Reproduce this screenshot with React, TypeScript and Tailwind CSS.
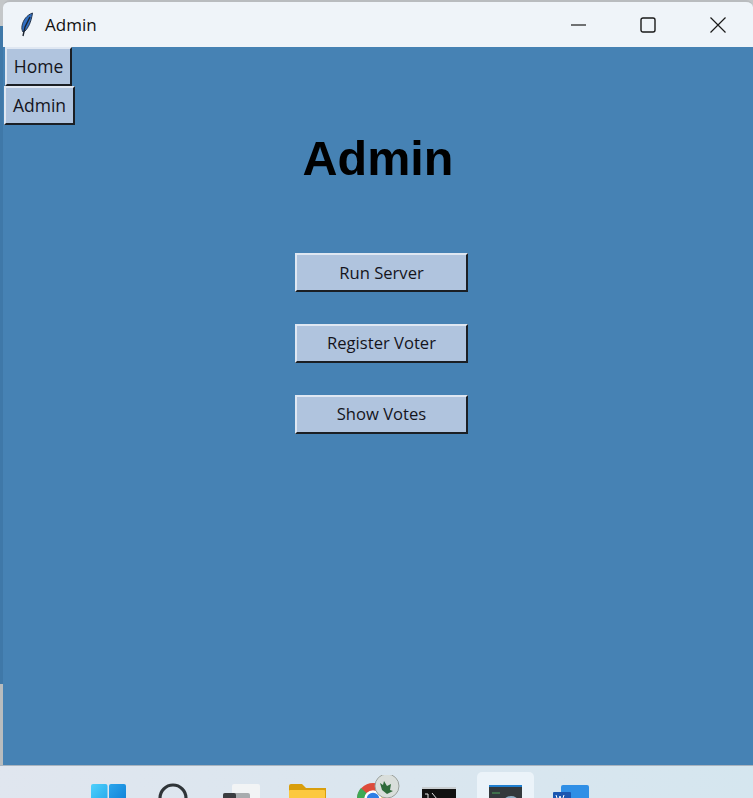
import React from "react";

const uiFont = "font-['Open_Sans','Noto_Sans',sans-serif]";

// tk style raised button
function TkButton({ label, className }: { label: string; className: string }) {
  return (
    <button
      className={`flex items-center justify-center bg-[#b0c4de] text-[#14141c] border-t-2 border-l-2 border-r-2 border-b-2 border-t-[#dfe7f2] border-l-[#dfe7f2] border-r-[#1b1f24] border-b-[#1b1f24] ${uiFont} ${className}`}
    >
      {label}
    </button>
  );
}

function Feather() {
  return (
    <svg width="16" height="26" viewBox="0 0 16 26">
      <path d="M13.500 1C8 3 4 8 3 14c-.4 2.500 0 4.500 1 6l2-1c3-3 6-8 7.500-18z" fill="#2f6fc4" stroke="#26364d" strokeWidth="1" />
      <path d="M11 5 6 15 4 24" fill="none" stroke="#1c2430" strokeWidth="1.400" />
    </svg>
  );
}

function WindowControls() {
  return (
    <div className="flex items-center gap-[54px] pr-[27px]">
      <svg width="16" height="16" viewBox="0 0 16 16">
        <path d="M0 8h15" stroke="#1a1a1a" strokeWidth="1.200" />
      </svg>
      <svg className="-ml-px" width="16" height="16" viewBox="0 0 16 16">
        <rect x="1" y="1" width="14" height="14" rx="2" fill="none" stroke="#1a1a1a" strokeWidth="1.400" />
      </svg>
      <svg width="16" height="16" viewBox="0 0 16 16">
        <path d="M.5.500l15 15M15.500.500l-15 15" stroke="#1a1a1a" strokeWidth="1.200" />
      </svg>
    </div>
  );
}

function Taskbar() {
  return (
    <div className="relative h-[33px] overflow-hidden bg-gradient-to-r from-[#e0e6ef] to-[#d5e6ef] border-t border-[#a9b4bf]">
      {/* start */}
      <svg className="absolute left-[91px] top-[18px]" width="35" height="20" viewBox="0 0 35 20">
        <defs>
          <linearGradient id="startLeft" x1="0" y1="0" x2="1" y2="1">
            <stop offset="0" stopColor="#4fd0fb" />
            <stop offset="1" stopColor="#22a7ec" />
          </linearGradient>
          <linearGradient id="startRight" x1="0" y1="0" x2="1" y2="1">
            <stop offset="0" stopColor="#2aa5ec" />
            <stop offset="1" stopColor="#0f7fd6" />
          </linearGradient>
        </defs>
        <rect x="0" y="0" width="16.500" height="20" rx="2" fill="url(#startLeft)" />
        <rect x="18" y="0" width="17" height="20" rx="2" fill="url(#startRight)" />
      </svg>
      {/* search */}
      <svg className="absolute left-[158px] top-[17px]" width="30" height="20" viewBox="0 0 30 20">
        <circle cx="15" cy="15" r="13" fill="none" stroke="#2f3438" strokeWidth="3.200" />
      </svg>
      {/* task view */}
      <svg className="absolute left-[223px] top-[18px]" width="38" height="20" viewBox="0 0 38 20">
        <rect x="9" y="0" width="28" height="20" rx="2" fill="#f2f4f5" />
        <rect x="0" y="9" width="27" height="11" rx="2" fill="#a8acae" />
        <rect x="0" y="9" width="13" height="11" rx="2" fill="#3a3d40" />
      </svg>
      {/* explorer */}
      <svg className="absolute left-[289px] top-[18px]" width="37" height="20" viewBox="0 0 37 20">
        <path d="M0 2a2 2 0 012-2h11l4 4h20v16H0z" fill="#d99e0b" />
        <rect x="0" y="6" width="36" height="14" rx="1" fill="#fcc93f" />
      </svg>
      {/* chrome with profile badge */}
      <svg className="absolute left-[355px] top-[9px]" width="46" height="29" viewBox="0 0 46 29">
        <circle cx="18" cy="24" r="16" fill="#dd4b3a" />
        <path d="M18 24 32 16a16 16 0 010 16z" fill="#f6c02c" />
        <path d="M18 24 6 13a16 16 0 00-4 11z" fill="#3ea956" />
        <circle cx="18" cy="24" r="7.500" fill="#2f7fe6" stroke="#fff" strokeWidth="2.500" />
        <circle cx="32" cy="11" r="12" fill="#d9dedb" stroke="#9aa09c" strokeWidth="1" />
        <path d="M25 8l3 2 1-4 3 5 4-2-1 6 3 1-6 3-5-4z" fill="#2f6b3b" />
      </svg>
      {/* terminal */}
      <svg className="absolute left-[422px] top-[21px]" width="34" height="17" viewBox="0 0 34 17">
        <rect x="0" y="0" width="34" height="17" fill="#111" />
        <rect x="0" y="0" width="34" height="2" fill="#c9ced1" />
        <path d="M3 7h3v5H3M8 7v0M8 11v0M10 6l5 6M16 12h6" stroke="#e6e6e6" strokeWidth="1" fill="none" />
      </svg>
      {/* active app */}
      <div className="absolute left-[477px] top-[6px] h-[40px] w-[57px] rounded-[5px] bg-[#ebf3f9]" />
      <svg className="absolute left-[489px] top-[19px]" width="33" height="19" viewBox="0 0 33 19">
        <rect x="0" y="0" width="33" height="19" fill="#33393c" />
        <rect x="0" y="0" width="33" height="2" fill="#1f7fd0" />
        <path d="M3 8h8" stroke="#4fa65a" strokeWidth="1" />
        <ellipse cx="22" cy="16" rx="7" ry="5" fill="#8fb0c6" />
      </svg>
      {/* word */}
      <svg className="absolute left-[553px] top-[19px]" width="36" height="19" viewBox="0 0 36 19">
        <rect x="8" y="0" width="28" height="19" rx="2" fill="#2f8fe6" />
        <rect x="0" y="7" width="18" height="12" rx="1" fill="#1a56b0" />
        <path d="M3 10l2 6 2-5 2 5 2-6" stroke="#fff" strokeWidth="1" fill="none" />
      </svg>
    </div>
  );
}

export default function App() {
  return (
    <div className="flex h-[798px] w-[753px] flex-col overflow-hidden">
      <div className="flex h-[765px]">
        {/* what shows behind the window on the left */}
        <div className="flex w-[3px] flex-col">
          <div className="h-[26px] bg-[#c4c7c9]" />
          <div className="h-[658px] bg-[#3f78a8]" />
          <div className="flex-1 bg-[#b8bcbe]" />
        </div>

        <div className="flex flex-1 flex-col bg-[#c4c7c9]">
          {/* Title bar */}
          <div className="flex h-[47px] items-center justify-between rounded-t-[7px] border-t-2 border-[#b9bcbf] bg-[#eff4f9]">
            <div className={`flex items-center gap-[10px] pl-[16px] text-[17px] text-[#111] ${uiFont}`}>
              <Feather />
              <span>Admin</span>
            </div>
            <WindowControls />
          </div>

          {/* Window body */}
          <div className="flex flex-1 flex-col bg-[#4682b4]">
            <div className="flex flex-col items-start">
              <TkButton label="Home" className="ml-[2px] h-[39px] w-[67px] pb-[1px] text-[17.500px]" />
              <TkButton label="Admin" className="ml-[1px] h-[39px] w-[71px] pb-[1px] text-[17.500px]" />
            </div>

            <h1 className="mt-[6px] text-center font-['Liberation_Sans',sans-serif] text-[48.500px] leading-[55px] font-bold text-black">
              Admin
            </h1>

            <div className="mt-[67px] flex flex-col gap-[32px] pl-[292px]">
              <TkButton label="Run Server" className="h-[39px] w-[173px] pt-[1px] text-[16.600px]" />
              <TkButton label="Register Voter" className="h-[39px] w-[173px] text-[16.600px]" />
              <TkButton label="Show Votes" className="h-[39px] w-[173px] pb-[1px] text-[16.600px]" />
            </div>
          </div>
        </div>
      </div>

      <Taskbar />
    </div>
  );
}
